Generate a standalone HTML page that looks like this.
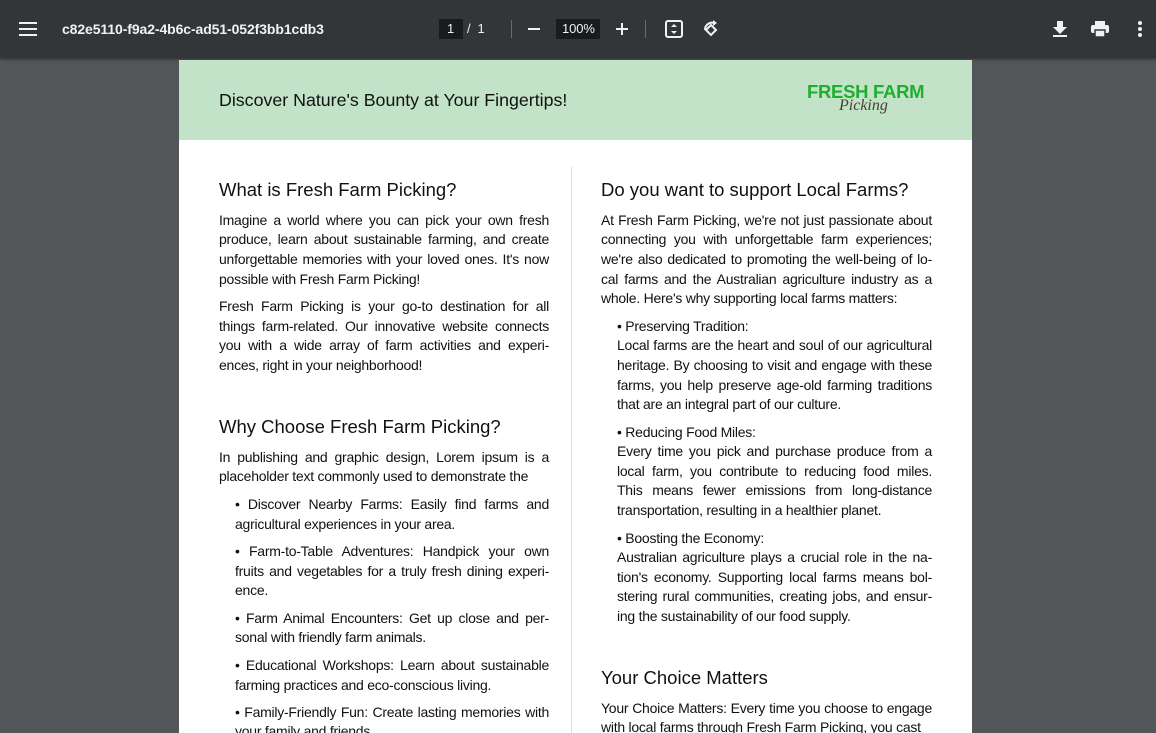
<!DOCTYPE html>
<html><head><meta charset="utf-8"><style>
*{margin:0;padding:0;box-sizing:border-box}
html,body{width:1156px;height:733px;overflow:hidden}
body{background:#525659;font-family:"Liberation Sans",Arial,sans-serif;position:relative}
.tb{position:absolute;left:0;top:0;width:1156px;height:58px;background:#323639;box-shadow:0 1px 3px rgba(0,0,0,.5);color:#f1f1f1}
.tb .t{position:absolute;top:20px;font-size:14px;font-weight:bold;letter-spacing:-.1px}
.page{position:absolute;left:179px;top:60px;width:793px;height:673px;background:#fff}
.hdr{position:absolute;left:0;top:0;width:793px;height:80px;background:#c3e3c9}
.l{position:absolute;font-size:14px;line-height:20px;color:#111;white-space:nowrap;letter-spacing:-0.25px}
.j{text-align:justify;text-align-last:justify}
.h{position:absolute;font-size:18.5px;color:#111;white-space:nowrap}
</style></head><body>
<div class="tb">
<svg style="position:absolute;left:19px;top:22px" width="18" height="14"><rect y="0" width="18" height="2" fill="#f1f1f1"/><rect y="6" width="18" height="2" fill="#f1f1f1"/><rect y="12" width="18" height="2" fill="#f1f1f1"/></svg>
<div class="t" style="left:62px;top:21px">c82e5110-f9a2-4b6c-ad51-052f3bb1cdb3</div>
<div style="position:absolute;left:439px;top:19px;width:24px;height:20px;background:#191b1c"></div>
<div class="t" style="left:447px;font-weight:normal;font-size:13px;top:21px">1</div>
<div class="t" style="left:467px;font-weight:normal;font-size:13px;top:21px">/&nbsp;&nbsp;1</div>
<div style="position:absolute;left:511px;top:20px;width:1px;height:18px;background:#6a6d70"></div>
<div style="position:absolute;left:528px;top:28px;width:12px;height:2px;background:#f1f1f1"></div>
<div style="position:absolute;left:556px;top:19px;width:44px;height:20px;background:#191b1c"></div>
<div class="t" style="left:562px;font-weight:normal;font-size:13px;top:21px">100%</div>
<div style="position:absolute;left:616px;top:28px;width:12px;height:2px;background:#f1f1f1"></div>
<div style="position:absolute;left:621px;top:23px;width:2px;height:12px;background:#f1f1f1"></div>
<div style="position:absolute;left:645px;top:20px;width:1px;height:18px;background:#6a6d70"></div>
<svg style="position:absolute;left:665px;top:20px" width="19" height="18"><rect x="1" y="1" width="16" height="16" rx="2" fill="none" stroke="#f1f1f1" stroke-width="2"/><path d="M9 4l-3 3h6zM9 14l-3-3h6z" fill="#f1f1f1"/></svg>
<svg style="position:absolute;left:701px;top:19px" width="19" height="20"><path d="M10 6l5 5-5 5-5-5z" fill="none" stroke="#f1f1f1" stroke-width="2"/><path d="M4 11a7 7 0 0 1 9-7" fill="none" stroke="#f1f1f1" stroke-width="2"/><path d="M12 1v6l4-3z" fill="#f1f1f1"/></svg>
<svg style="position:absolute;left:1052px;top:20px" width="16" height="18"><path d="M5 1h6v6h4l-7 7-7-7h4z" fill="#f1f1f1"/><rect x="1" y="15" width="14" height="2" fill="#f1f1f1"/></svg>
<svg style="position:absolute;left:1091px;top:21px" width="18" height="16"><rect x="4" y="0" width="10" height="4" fill="#f1f1f1"/><rect x="0" y="4" width="18" height="8" rx="2" fill="#f1f1f1"/><rect x="4" y="9" width="10" height="7" fill="#f1f1f1" stroke="#323639" stroke-width="1.5"/></svg>
<svg style="position:absolute;left:1137px;top:21px" width="6" height="16"><circle cx="3" cy="2" r="2" fill="#f1f1f1"/><circle cx="3" cy="8" r="2" fill="#f1f1f1"/><circle cx="3" cy="14" r="2" fill="#f1f1f1"/></svg>
</div>
<div class="page">
<div class="hdr">
<div style="position:absolute;left:40px;top:30px;font-size:17.8px;color:#111">Discover Nature's Bounty at Your Fingertips!</div>
<div style="position:absolute;left:628px;top:21px;font-size:18.5px;font-weight:bold;color:#1fae2f;letter-spacing:-.3px">FRESH FARM</div>
<div style="position:absolute;left:660px;top:37px;font-size:16px;font-style:italic;font-family:'Liberation Serif',serif;color:#4a4030">Picking</div>
</div>
<div style="position:absolute;left:392px;top:107px;width:1px;height:600px;background:#ddd"></div>
</div>

<div class="h" style="left:219px;top:179px">What is Fresh Farm Picking?</div>
<div class="l j" style="left:219px;top:210px;width:330px">Imagine a world where you can pick your own fresh</div>
<div class="l j" style="left:219px;top:229px;width:330px">produce, learn about sustainable farming, and create</div>
<div class="l j" style="left:219px;top:249px;width:330px">unforgettable memories with your loved ones. It's now</div>
<div class="l" style="left:219px;top:269px">possible with Fresh Farm Picking!</div>
<div class="l j" style="left:219px;top:296px;width:330px">Fresh Farm Picking is your go-to destination for all</div>
<div class="l j" style="left:219px;top:316px;width:330px">things farm-related. Our innovative website connects</div>
<div class="l j" style="left:219px;top:335px;width:330px">you with a wide array of farm activities and experi-</div>
<div class="l" style="left:219px;top:355px">ences, right in your neighborhood!</div>

<div class="h" style="left:219px;top:416px">Why Choose Fresh Farm Picking?</div>
<div class="l j" style="left:219px;top:447px;width:330px">In publishing and graphic design, Lorem ipsum is a</div>
<div class="l" style="left:219px;top:466px">placeholder text commonly used to demonstrate the</div>
<div class="l j" style="left:235px;top:494px;width:314px">• Discover Nearby Farms: Easily find farms and</div>
<div class="l" style="left:235px;top:514px">agricultural experiences in your area.</div>
<div class="l j" style="left:235px;top:541px;width:314px">• Farm-to-Table Adventures: Handpick your own</div>
<div class="l j" style="left:235px;top:561px;width:314px">fruits and vegetables for a truly fresh dining experi-</div>
<div class="l" style="left:235px;top:580px">ence.</div>
<div class="l j" style="left:235px;top:608px;width:314px">• Farm Animal Encounters: Get up close and per-</div>
<div class="l" style="left:235px;top:627px">sonal with friendly farm animals.</div>
<div class="l j" style="left:235px;top:655px;width:314px">• Educational Workshops: Learn about sustainable</div>
<div class="l" style="left:235px;top:675px">farming practices and eco-conscious living.</div>
<div class="l j" style="left:235px;top:702px;width:314px">• Family-Friendly Fun: Create lasting memories with</div>
<div class="l" style="left:235px;top:721px">your family and friends.</div>

<div class="h" style="left:601px;top:179px">Do you want to support Local Farms?</div>
<div class="l j" style="left:601px;top:210px;width:331px">At Fresh Farm Picking, we're not just passionate about</div>
<div class="l j" style="left:601px;top:229px;width:331px">connecting you with unforgettable farm experiences;</div>
<div class="l j" style="left:601px;top:249px;width:331px">we're also dedicated to promoting the well-being of lo-</div>
<div class="l j" style="left:601px;top:269px;width:331px">cal farms and the Australian agriculture industry as a</div>
<div class="l" style="left:601px;top:288px">whole. Here's why supporting local farms matters:</div>
<div class="l" style="left:617px;top:316px">• Preserving Tradition:</div>
<div class="l j" style="left:617px;top:335px;width:315px">Local farms are the heart and soul of our agricultural</div>
<div class="l j" style="left:617px;top:355px;width:315px">heritage. By choosing to visit and engage with these</div>
<div class="l j" style="left:617px;top:375px;width:315px">farms, you help preserve age-old farming traditions</div>
<div class="l" style="left:617px;top:394px">that are an integral part of our culture.</div>
<div class="l" style="left:617px;top:422px">• Reducing Food Miles:</div>
<div class="l j" style="left:617px;top:441px;width:315px">Every time you pick and purchase produce from a</div>
<div class="l j" style="left:617px;top:461px;width:315px">local farm, you contribute to reducing food miles.</div>
<div class="l j" style="left:617px;top:480px;width:315px">This means fewer emissions from long-distance</div>
<div class="l" style="left:617px;top:500px">transportation, resulting in a healthier planet.</div>
<div class="l" style="left:617px;top:528px">• Boosting the Economy:</div>
<div class="l j" style="left:617px;top:547px;width:315px">Australian agriculture plays a crucial role in the na-</div>
<div class="l j" style="left:617px;top:567px;width:315px">tion's economy. Supporting local farms means bol-</div>
<div class="l j" style="left:617px;top:586px;width:315px">stering rural communities, creating jobs, and ensur-</div>
<div class="l" style="left:617px;top:606px">ing the sustainability of our food supply.</div>

<div class="h" style="left:601px;top:667px">Your Choice Matters</div>
<div class="l j" style="left:601px;top:698px;width:331px">Your Choice Matters: Every time you choose to engage</div>
<div class="l" style="left:601px;top:717px">with local farms through Fresh Farm Picking, you cast</div>
</body></html>
